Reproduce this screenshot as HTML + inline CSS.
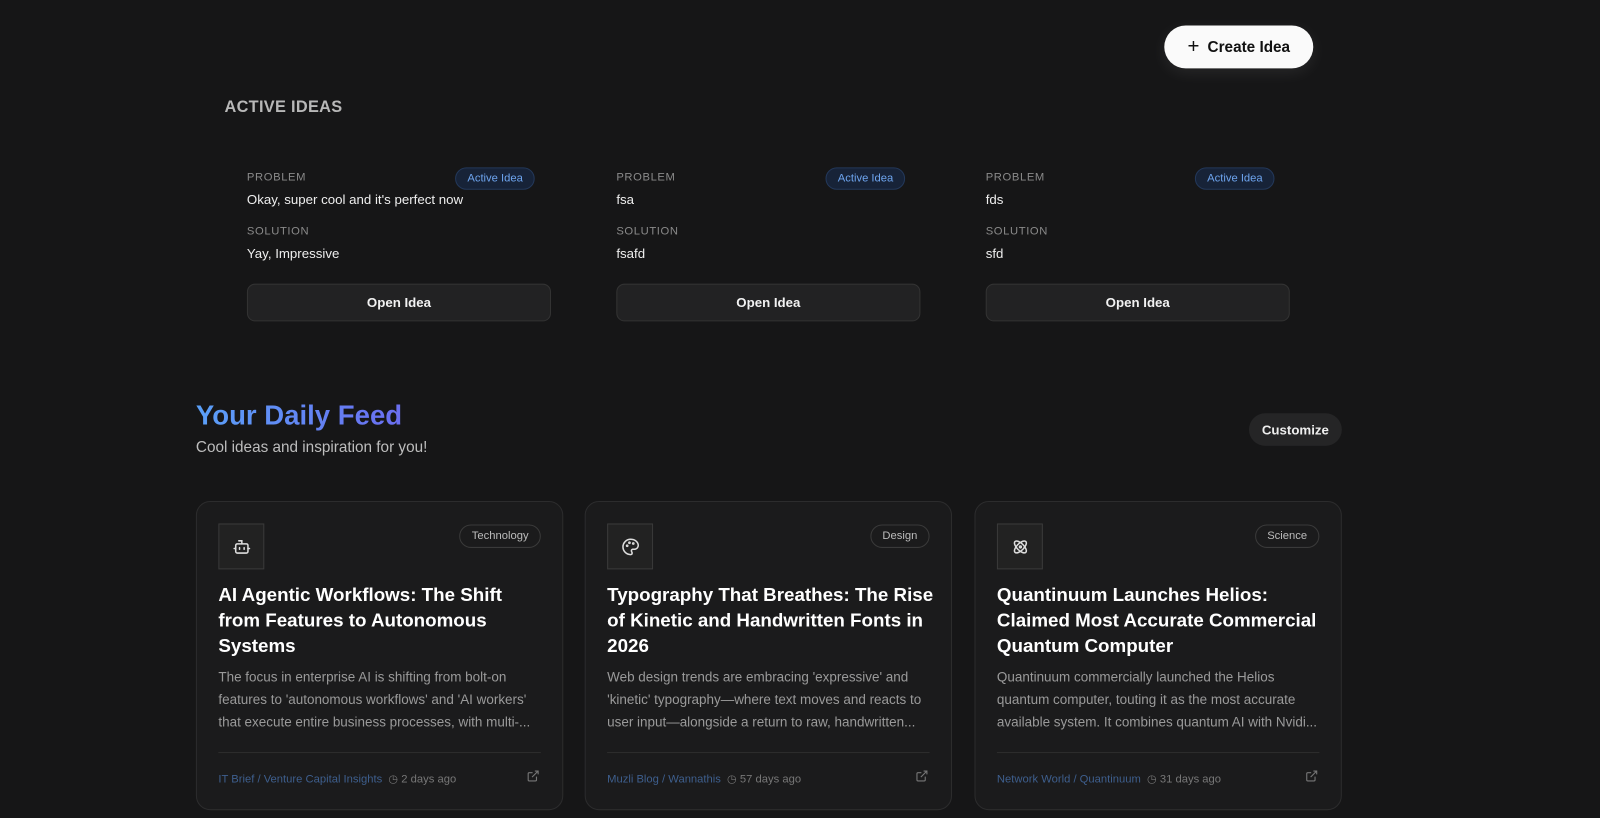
<!DOCTYPE html>
<html><head><meta charset="utf-8"><style>
*{box-sizing:border-box;margin:0;padding:0}
html,body{width:1600px;height:818px;background:#161617;overflow:hidden}
body{font-family:"Liberation Sans",sans-serif;color:#eee}
#w{position:absolute;left:0;top:0;width:1568px;height:802px;transform:scale(1.0204);transform-origin:0 0}
.abs{position:absolute}
.create{left:1141px;top:25px;width:146px;height:42px;background:#fafafa;border-radius:21px;color:#111;font-weight:bold;font-size:15px;display:flex;align-items:center;justify-content:center;gap:8px;box-shadow:0 4px 16px rgba(255,255,255,.08)}
.h{left:220px;top:97px;font-size:16px;font-weight:bold;color:#b8b8b8;letter-spacing:.3px}
.lab{font-size:11px;color:#8a8a8a;letter-spacing:.6px}
.val{font-size:13px;color:#eee}
.badge{height:22px;padding:0 11px;border-radius:11px;background:#172338;border:1px solid #23385a;color:#6ea5ef;font-size:11px;line-height:20px}
.btn{width:298px;height:37px;border:1px solid #333;border-radius:8px;background:#222223;font-size:13px;font-weight:bold;color:#f2f2f2;display:flex;align-items:center;justify-content:center}
.title{left:192px;top:392px;font-size:27px;font-weight:bold;background:linear-gradient(90deg,#5aa0f8,#6a6ef0);-webkit-background-clip:text;background-clip:text;color:transparent}
.sub{left:192px;top:430px;font-size:15px;color:#bdbdbd}
.cust{left:1224px;top:405px;width:91px;height:32px;border-radius:16px;background:#252526;font-size:13px;font-weight:bold;color:#eee;display:flex;align-items:center;justify-content:center}
.card{top:491px;width:360px;height:303px;border:1px solid #2c2c2d;border-radius:14px;background:#1b1b1c}
.ic{left:21px;top:21px;width:45px;height:45px;border:1px solid #3a3a3a;background:#222;display:flex;align-items:center;justify-content:center}
.tag{right:21px;top:22px;height:23px;padding:0 11px;border:1px solid #3a3a3a;border-radius:12px;font-size:11px;color:#bbb;line-height:21px}
.ct{left:21px;top:78px;font-size:18.4px;font-weight:bold;line-height:25px;color:#fff;white-space:nowrap}
.cd{left:21px;top:161px;font-size:13.2px;line-height:22px;color:#9a9a9a;white-space:nowrap}
.dv{left:21px;right:21px;top:245px;border-top:1px solid #2e2e2e}
.ft{left:21px;top:265px;font-size:11px;color:#777;display:flex;align-items:center;gap:6px}
.ft .s{color:#3e5f8e}
.ex{right:22px;top:262px}
</style></head><body><div id="w">
<div class="abs create"><span style="font-size:20px;font-weight:normal">+</span>Create Idea</div>
<div class="abs h">ACTIVE IDEAS</div>

<div class="abs lab" style="left:242px;top:168px">PROBLEM</div>
<div class="abs badge" style="left:446px;top:164px">Active Idea</div>
<div class="abs val" style="left:242px;top:188px">Okay, super cool and it's perfect now</div>
<div class="abs lab" style="left:242px;top:221px">SOLUTION</div>
<div class="abs val" style="left:242px;top:241px">Yay, Impressive</div>
<div class="abs btn" style="left:242px;top:278px">Open Idea</div>

<div class="abs lab" style="left:604px;top:168px">PROBLEM</div>
<div class="abs badge" style="left:809px;top:164px">Active Idea</div>
<div class="abs val" style="left:604px;top:188px">fsa</div>
<div class="abs lab" style="left:604px;top:221px">SOLUTION</div>
<div class="abs val" style="left:604px;top:241px">fsafd</div>
<div class="abs btn" style="left:604px;top:278px">Open Idea</div>

<div class="abs lab" style="left:966px;top:168px">PROBLEM</div>
<div class="abs badge" style="left:1171px;top:164px">Active Idea</div>
<div class="abs val" style="left:966px;top:188px">fds</div>
<div class="abs lab" style="left:966px;top:221px">SOLUTION</div>
<div class="abs val" style="left:966px;top:241px">sfd</div>
<div class="abs btn" style="left:966px;top:278px">Open Idea</div>

<div class="abs title">Your Daily Feed</div>
<div class="abs sub">Cool ideas and inspiration for you!</div>
<div class="abs cust">Customize</div>

<div class="abs card" style="left:192px">
 <div class="abs ic"><svg width="18" height="18" viewBox="0 0 24 24" fill="none" stroke="#ddd" stroke-width="2" stroke-linecap="round"><path d="M12 8V4H8"/><rect x="4" y="8" width="16" height="12" rx="2"/><path d="M2 14h2M20 14h2M15 13v2M9 13v2"/></svg></div>
 <div class="abs tag">Technology</div>
 <div class="abs ct">AI Agentic Workflows: The Shift<br>from Features to Autonomous<br>Systems</div>
 <div class="abs cd">The focus in enterprise AI is shifting from bolt-on<br>features to 'autonomous workflows' and 'AI workers'<br>that execute entire business processes, with multi-...</div>
 <div class="abs dv"></div>
 <div class="abs ft"><span class="s">IT Brief / Venture Capital Insights</span><span>◷ 2 days ago</span></div>
 <svg class="abs ex" width="13" height="13" viewBox="0 0 24 24" fill="none" stroke="#777" stroke-width="2"><path d="M15 3h6v6M10 14L21 3M18 13v6a2 2 0 0 1-2 2H5a2 2 0 0 1-2-2V8a2 2 0 0 1 2-2h6"/></svg>
</div>

<div class="abs card" style="left:573px">
 <div class="abs ic"><svg width="18" height="18" viewBox="0 0 24 24" fill="none" stroke="#ddd" stroke-width="2"><path d="M12 2a10 10 0 0 0 0 20c1.5 0 2-1 2-2 0-1.5-1-1.5-1-3 0-1 1-2 2-2h2a5 5 0 0 0 5-5c0-4.5-4.5-8-10-8z"/><circle cx="7.5" cy="10.5" r=".8"/><circle cx="10.5" cy="6.5" r=".8"/><circle cx="15.5" cy="7.5" r=".8"/></svg></div>
 <div class="abs tag">Design</div>
 <div class="abs ct">Typography That Breathes: The Rise<br>of Kinetic and Handwritten Fonts in<br>2026</div>
 <div class="abs cd">Web design trends are embracing 'expressive' and<br>'kinetic' typography—where text moves and reacts to<br>user input—alongside a return to raw, handwritten...</div>
 <div class="abs dv"></div>
 <div class="abs ft"><span class="s">Muzli Blog / Wannathis</span><span>◷ 57 days ago</span></div>
 <svg class="abs ex" width="13" height="13" viewBox="0 0 24 24" fill="none" stroke="#777" stroke-width="2"><path d="M15 3h6v6M10 14L21 3M18 13v6a2 2 0 0 1-2 2H5a2 2 0 0 1-2-2V8a2 2 0 0 1 2-2h6"/></svg>
</div>

<div class="abs card" style="left:955px">
 <div class="abs ic"><svg width="18" height="18" viewBox="0 0 24 24" fill="none" stroke="#ddd" stroke-width="2"><circle cx="12" cy="12" r="1.2"/><ellipse cx="12" cy="12" rx="10" ry="4.5" transform="rotate(45 12 12)"/><ellipse cx="12" cy="12" rx="10" ry="4.5" transform="rotate(-45 12 12)"/></svg></div>
 <div class="abs tag">Science</div>
 <div class="abs ct">Quantinuum Launches Helios:<br>Claimed Most Accurate Commercial<br>Quantum Computer</div>
 <div class="abs cd">Quantinuum commercially launched the Helios<br>quantum computer, touting it as the most accurate<br>available system. It combines quantum AI with Nvidi...</div>
 <div class="abs dv"></div>
 <div class="abs ft"><span class="s">Network World / Quantinuum</span><span>◷ 31 days ago</span></div>
 <svg class="abs ex" width="13" height="13" viewBox="0 0 24 24" fill="none" stroke="#777" stroke-width="2"><path d="M15 3h6v6M10 14L21 3M18 13v6a2 2 0 0 1-2 2H5a2 2 0 0 1-2-2V8a2 2 0 0 1 2-2h6"/></svg>
</div>
</div></body></html>
